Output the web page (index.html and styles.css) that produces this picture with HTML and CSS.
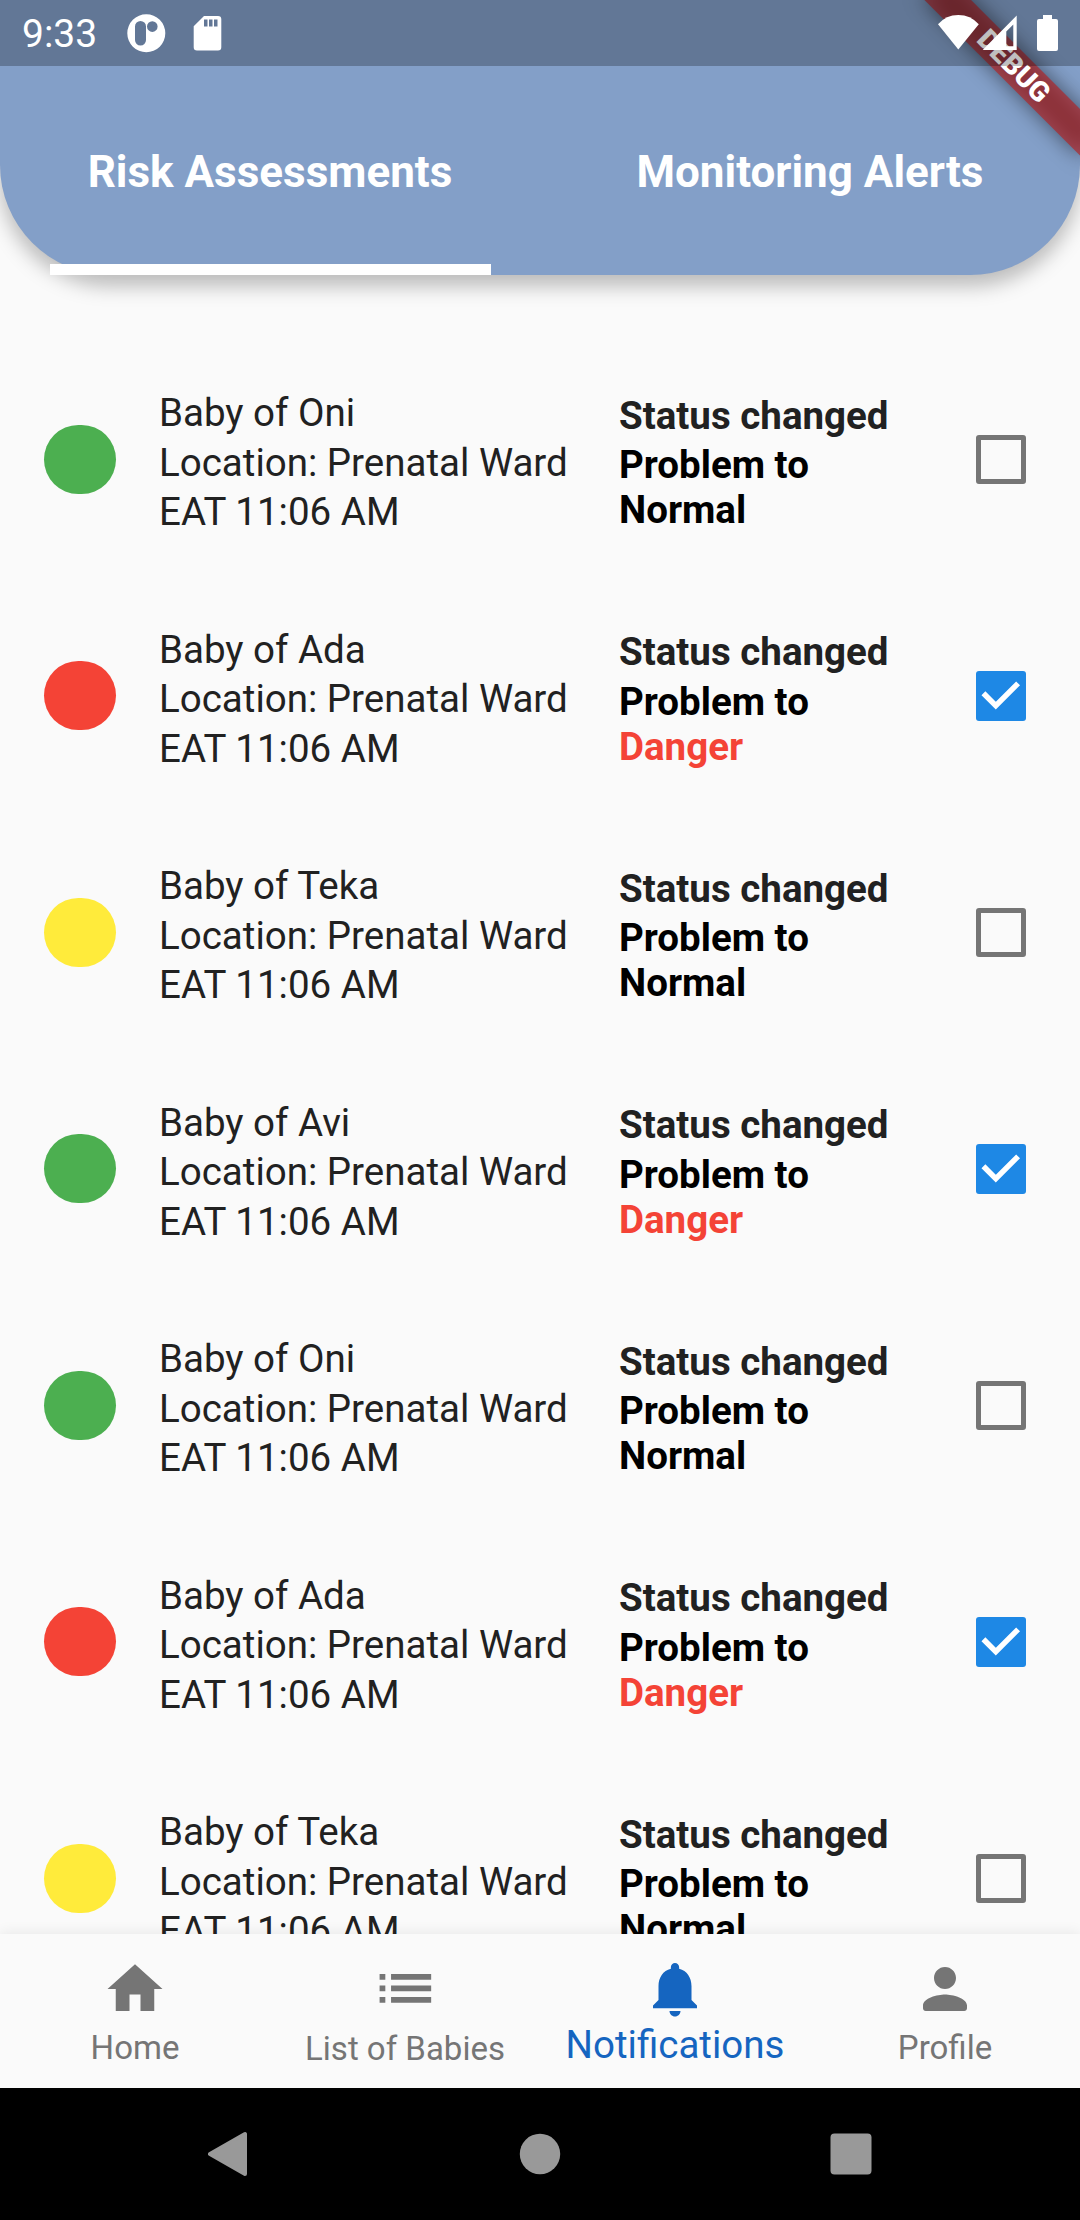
FILE: index.html
```html
<!DOCTYPE html>
<html lang="en">
<head>
<meta charset="utf-8">
<title>Notifications</title>
<link rel="stylesheet" href="styles.css">
</head>
<body>
<div class="screen">
  <header class="header">
    <nav class="tabs">
      <div class="tab tab-active"><span>Risk Assessments</span></div>
      <div class="tab"><span>Monitoring Alerts</span></div>
    </nav>
  </header>

  <main class="list" id="list"></main>

  <nav class="bottom-nav">
    <div class="nav-item">
      <svg class="icon" viewBox="0 0 24 24"><path d="M10 20v-6h4v6h5v-8h3L12 3 2 12h3v8z"/></svg>
      <span>Home</span>
    </div>
    <div class="nav-item nav-item-large">
      <svg class="icon" viewBox="0 0 24 24"><path d="M3 13h2v-2H3v2zm0 4h2v-2H3v2zm0-8h2V7H3v2zm4 4h14v-2H7v2zm0 4h14v-2H7v2zM7 7v2h14V7H7z"/></svg>
      <span>List of Babies</span>
    </div>
    <div class="nav-item nav-item-active">
      <svg class="icon" viewBox="0 0 24 24"><path d="M12 22c1.1 0 2-.9 2-2h-4c0 1.1.89 2 2 2zm6-6v-5c0-3.07-1.64-5.64-4.5-6.32V4c0-.83-.67-1.5-1.5-1.5s-1.5.67-1.5 1.5v.68C7.63 5.36 6 7.92 6 11v5l-2 2v1h16v-1l-2-2z"/></svg>
      <span>Notifications</span>
    </div>
    <div class="nav-item">
      <svg class="icon" viewBox="0 0 24 24"><path d="M12 12c2.21 0 4-1.79 4-4s-1.79-4-4-4-4 1.79-4 4 1.79 4 4 4zm0 2c-2.67 0-8 1.34-8 4v1c0 .55.45 1 1 1h14c.55 0 1-.45 1-1v-1c0-2.66-5.33-4-8-4z"/></svg>
      <span>Profile</span>
    </div>
  </nav>

  <div class="system-nav">
    <svg class="back" viewBox="0 0 42 46"><path d="M37 3v40L2 23z"/></svg>
    <svg viewBox="0 0 42 42"><circle cx="21" cy="21" r="20.2"/></svg>
    <svg viewBox="0 0 42 42"><rect x=".5" y=".5" width="41" height="41" rx="4"/></svg>
  </div>

  <div class="banner">
    <div class="banner-shadow"></div>
    <div class="banner-ribbon">DEBUG</div>
  </div>

  <div class="status-bar">
    <span class="clock">9:33</span>
    <svg class="status-left" width="88" height="66" viewBox="0 0 88 66">
      <path fill-rule="evenodd" d="M19.3 14.3a19 19 0 1 1 0 38 19 19 0 1 1 0-38zM13.5 21a5.5 5.5 0 0 0-5.5 5.500v13.500a5.500 5.500 0 0 0 11 0v-13.500a5.500 5.500 0 0 0-5.500-5.500zM25.300 21.300a5.300 5.300 0 1 0 0 10.600 5.300 5.300 0 1 0 0-10.600z"/>
      <path fill-rule="evenodd" d="M77 16h14a3.300 3.300 0 0 1 3.300 3.300v28a3.300 3.300 0 0 1-3.300 3.300H70a3.300 3.300 0 0 1-3.300-3.300V26.300zM77 19.500v7h3.500v-7zM82 19.500v7h3.500v-7zM87 19.500v7h3.500v-7z"/>
    </svg>
    <svg class="status-right" width="130" height="66" viewBox="930 0 130 66">
      <path d="M958.300 49.500L938 24.300Q946 15 958.300 15T978.800 24.300z"/>
      <path fill-rule="evenodd" d="M982.700 50L1016.700 15.500V50zM1006.300 31.500V46.300H1013.300V24.500z"/>
      <path d="M1043 15h9v4h4a2 2 0 0 1 2 2v28a2 2 0 0 1-2 2h-17a2 2 0 0 1-2-2V21a2 2 0 0 1 2-2h4z"/>
    </svg>
  </div>
</div>
<script src="app.js"></script>
</body>
</html>
```
FILE: styles.css
```css
* {
  box-sizing: border-box;
}

body {
  margin: 0;
  font-family: Roboto, "Liberation Sans", sans-serif;
  background: #fafafa;
}

.screen {
  position: relative;
  display: flex;
  flex-direction: column;
  width: 1080px;
  height: 2220px;
  overflow: hidden;
  background: #fafafa;
}

/* Top tabs */
.header {
  flex: none;
  height: 275px;
  padding-top: 66px;
  background: #839fc8;
  border-radius: 0 0 110px 110px;
  box-shadow: 0 11px 20px rgba(0, 0, 0, 0.26);
}

.tabs {
  display: flex;
  height: 209px;
}

.tab {
  flex: 1;
  display: flex;
  flex-direction: column;
  justify-content: center;
  align-items: center;
  margin: 0 49.5px;
  padding-top: 14px;
  border-bottom: 11px solid transparent;
  color: #fff;
  font-size: 44px;
  font-weight: 700;
  line-height: 52px;
  white-space: nowrap;
}

.tab-active {
  border-color: #fff;
}

/* Alert rows */
.list {
  flex: 1;
  min-height: 0;
  padding-top: 66px;
  overflow: hidden;
}

.row {
  display: flex;
  align-items: center;
  height: 236.5px;
  padding: 0 54.5px 0 44px;
  font-size: 38.5px;
  color: #212121;
}

.dot {
  flex: none;
  width: 71.5px;
  height: 68.75px;
  margin-right: 43.5px;
  border-radius: 34.4px;
}

.green { background: #4caf50; }
.red { background: #f44336; }
.yellow { background: #ffeb3b; }

.details {
  width: 460px;
  padding-top: 6px;
  line-height: 49.5px;
  white-space: nowrap;
}

.change {
  flex: 1;
  padding-top: 6px;
  font-weight: 700;
  line-height: 45px;
}

.change-title {
  margin-bottom: 4.5px;
}

.change-text {
  color: #000;
}

.danger {
  color: #f44336;
}

.checkbox {
  flex: none;
  width: 49.5px;
  height: 49.5px;
  border: 5.5px solid #757575;
  border-radius: 3px;
}

.checkbox-checked {
  border: 0;
  background: #1e88e5;
}

.checkbox svg {
  display: block;
  width: 100%;
  height: 100%;
  fill: none;
  stroke: #fff;
  stroke-width: 2;
}

/* Bottom navigation */
.bottom-nav {
  flex: none;
  display: grid;
  grid-template-columns: repeat(4, 1fr);
  height: 154px;
  background: #fafafa;
  box-shadow: 0 0 14px rgba(0, 0, 0, 0.09);
}

.nav-item {
  display: flex;
  flex-direction: column;
  align-items: center;
  padding-top: 22px;
  color: #757575;
  font-size: 33px;
  line-height: 39px;
}

.icon {
  width: 66px;
  height: 66px;
  margin-bottom: 6px;
  fill: currentColor;
}

.nav-item-large {
  padding-top: 20px;
}

.nav-item-large .icon {
  width: 68.75px;
  height: 68.75px;
}

.nav-item-active {
  color: #1565c0;
  font-size: 38.5px;
  line-height: 45px;
}

.nav-item-active .icon {
  margin-bottom: 0;
}

/* System navigation */
.system-nav {
  position: relative;
  flex: none;
  display: flex;
  justify-content: space-between;
  align-items: center;
  height: 132px;
  padding: 0 208px;
  background: #000;
}

.system-nav svg {
  width: 42px;
  height: 42px;
  fill: #999;
}

.system-nav .back {
  height: 46px;
  stroke: #999;
  stroke-width: 4;
  stroke-linejoin: round;
}

/* Corner ribbon */
.banner {
  position: absolute;
  top: 0;
  left: 1080px;
  transform: rotate(45deg);
  transform-origin: 0 0;
}

.banner-shadow,
.banner-ribbon {
  position: absolute;
  top: 77px;
  left: -110px;
  width: 220px;
  height: 33px;
}

.banner-shadow {
  background: rgba(0, 0, 0, 0.5);
  filter: blur(10.9px);
}

.banner-ribbon {
  background: rgba(183, 28, 28, 0.627);
  color: #fff;
  font-size: 28.05px;
  font-weight: 900;
  line-height: 33px;
  text-align: center;
}

/* Status bar overlay */
.status-bar {
  position: absolute;
  top: 0;
  left: 0;
  display: flex;
  width: 1080px;
  height: 66px;
  padding: 0 20px 0 22px;
  background: rgba(0, 0, 0, 0.25);
  color: #fff;
}

.status-bar svg {
  fill: currentColor;
  overflow: visible;
}

.clock {
  width: 105px;
  font-size: 39px;
  line-height: 69px;
}

.status-right {
  margin-left: auto;
}
```
FILE: app.js
```js
const rows = [
  ["Oni", "green", false],
  ["Ada", "red", true],
  ["Teka", "yellow", false],
  ["Avi", "green", true],
  ["Oni", "green", false],
  ["Ada", "red", true],
  ["Teka", "yellow", false],
];

const check = '<svg viewBox="0 0 18 18"><path d="M2.7 8.1 7.2 12.600 15.300 4.500"/></svg>';

document.getElementById("list").innerHTML = rows.map(([name, color, checked]) => `
  <div class="row">
    <div class="dot ${color}"></div>
    <div class="details">Baby of ${name}<br>Location: Prenatal Ward<br>EAT 11:06 AM</div>
    <div class="change">
      <div class="change-title">Status changed</div>
      <div class="change-text">Problem to<br>${checked ? '<span class="danger">Danger</span>' : "Normal"}</div>
    </div>
    <div class="checkbox ${checked ? "checkbox-checked" : ""}">${checked ? check : ""}</div>
  </div>`).join("");
```
